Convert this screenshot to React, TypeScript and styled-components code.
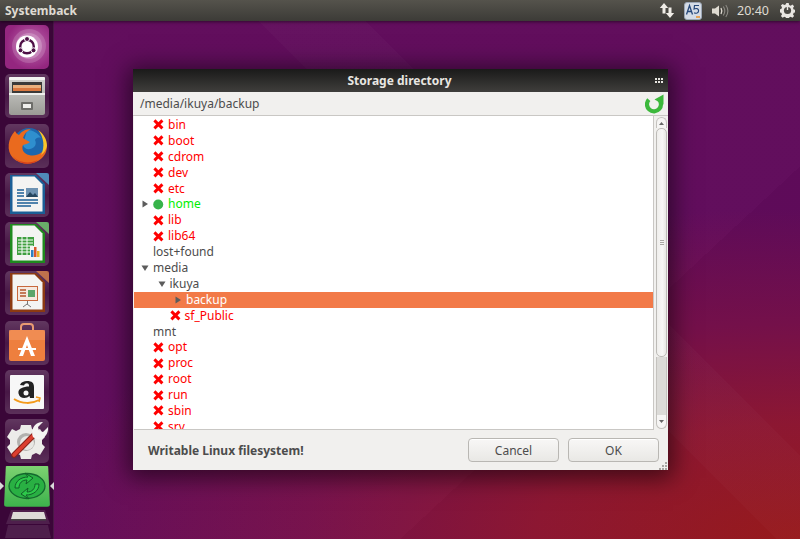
import React from "react";
import styled, { createGlobalStyle } from "styled-components";

const Global = createGlobalStyle`
  html, body { margin: 0; padding: 0; width: 800px; height: 539px; overflow: hidden; }
  #root { width: 800px; height: 539px; }
  * { box-sizing: border-box; }
`;

const Screen = styled.div`
  position: relative;
  width: 800px;
  height: 539px;
  overflow: hidden;
  display: flex;
  flex-direction: column;
  font-family: "Noto Sans", "Open Sans", sans-serif;
  background:
    linear-gradient(137deg, rgba(255,255,255,.012) 0 71%, rgba(0,0,0,.02) 71% 100%),
    linear-gradient(45deg, rgba(255,255,255,0) 0 58%, rgba(255,255,255,.018) 58% 66%, rgba(0,0,0,0) 66%),
    radial-gradient(ellipse 760px 330px at 100% 100%, #9a1a1c 0%, #8f1733 35%, rgba(122,17,72,.85) 65%, rgba(94,8,87,0) 100%),
    #600b5b;
`;

const TopBar = styled.header`
  height: 21px;
  flex: none;
  display: flex;
  align-items: center;
  padding: 0 2px 0 5px;
  background: linear-gradient(#55534c, #3c3b37);
  box-shadow: 0 1px 3px rgba(0,0,0,.5);
  z-index: 2;
`;

const AppTitle = styled.span`
  flex: 1;
  font-size: 12px;
  font-weight: 700;
  color: #dfdbd2;
`;

const Tray = styled.div`
  display: flex;
  align-items: center;
`;

const TrayItem = styled.span<{ $w: number }>`
  width: ${(p) => p.$w}px;
  display: flex;
  justify-content: center;
  align-items: center;
  color: #dfdbd2;
  font-size: 12.5px;
`;

const Body = styled.div`
  flex: 1;
  display: flex;
  min-height: 0;
`;

const Launcher = styled.nav`
  width: 54px;
  flex: none;
  display: flex;
  flex-direction: column;
  gap: 5.3px;
  padding: 4px 0 0 5px;
  background: rgba(46, 4, 44, .75);
  border-right: 1px solid rgba(255,255,255,.08);
`;

const Tile = styled.div<{ $bg?: string }>`
  width: 44px;
  height: 44px;
  flex: none;
  border-radius: 5px;
  background: ${(p) => p.$bg ?? "linear-gradient(rgba(255,255,255,.2), rgba(255,255,255,.07) 50%, rgba(255,255,255,.17))"};
  display: flex;
  align-items: center;
  justify-content: center;
`;

const ActiveMark = styled.div`
  position: absolute;
  top: 482px;
  width: 0;
  height: 0;
  border-top: 4px solid transparent;
  border-bottom: 4px solid transparent;
`;
const MarkLeft = styled(ActiveMark)`
  left: 0;
  border-left: 4px solid #d8d8d8;
`;
const MarkRight = styled(ActiveMark)`
  left: 50px;
  border-right: 4px solid #d8d8d8;
`;

const Window = styled.section`
  position: absolute;
  left: 133px;
  top: 69px;
  width: 535px;
  height: 401px;
  display: flex;
  flex-direction: column;
  background: #f1f0ee;
  box-shadow: 0 3px 22px 5px rgba(0,0,0,.55);
`;

const TitleBar = styled.div`
  position: relative;
  height: 23px;
  flex: none;
  background: linear-gradient(#1a1a19, #3f3e3c);
  color: #e8e6e1;
  font-size: 12px;
  font-weight: 700;
  display: flex;
  align-items: center;
  justify-content: center;
  padding-right: 2px;
`;

const Grip = styled.span`
  position: absolute;
  right: 5px;
  top: 9px;
  display: grid;
  grid-template-columns: repeat(3, 2px);
  gap: 1px;
`;
const GripDot = styled.i`
  display: block;
  width: 2px;
  height: 2px;
  background: #e8e6e1;
`;

const PathBar = styled.div`
  height: 24px;
  flex: none;
  display: flex;
  align-items: center;
  justify-content: space-between;
  padding: 0 3px 0 7px;
  font-size: 12px;
  color: #4c4c4c;
  border-bottom: 1px solid #c9c7c4;
`;

const Main = styled.div`
  height: 314px;
  flex: none;
  display: flex;
  padding-left: 1px;
`;

const Tree = styled.div`
  flex: 1;
  min-width: 0;
  overflow: hidden;
  padding-top: 1px;
  background: #fff;
  border-right: 1px solid #c9c7c4;
  border-bottom: 1px solid #c9c7c4;
`;

const Row = styled.div<{ $level: number; $selected?: boolean; $color: string }>`
  height: 15.9px;
  display: flex;
  align-items: center;
  padding-left: ${(p) => 3 + p.$level * 16.5}px;
  font-size: 12px;
  line-height: 16px;
  color: ${(p) => (p.$selected ? "#fff" : p.$color)};
  background: ${(p) => (p.$selected ? "#f27a48" : "transparent")};
`;

const Expander = styled.span`
  width: 16px;
  flex: none;
  display: flex;
  align-items: center;
  justify-content: center;
`;

const Mark = styled.span`
  width: 15px;
  flex: none;
  display: flex;
  align-items: center;
`;

const Scrollbar = styled.div`
  width: 11px;
  flex: none;
  margin: 1px 1px 1px 2px;
  display: flex;
  flex-direction: column;
`;

const ScrollButton = styled.div<{ $down?: boolean }>`
  height: ${(p) => (p.$down ? 14 : 11)}px;
  flex: none;
  border-radius: ${(p) => (p.$down ? "0 0 6px 6px" : "6px 6px 0 0")};
  background: #f6f5f4;
  border: 1px solid #c4c2be;
  border-top-width: ${(p) => (p.$down ? 0 : 1)}px;
  border-bottom-width: ${(p) => (p.$down ? 1 : 0)}px;
  display: flex;
  align-items: center;
  justify-content: center;
`;

const Thumb = styled.div`
  height: 229px;
  flex: none;
  background: linear-gradient(90deg, #efeeec, #f8f7f6 60%, #e8e7e4);
  border: 1px solid #bdbbb7;
  border-radius: 5px;
  display: flex;
  flex-direction: column;
  align-items: center;
  justify-content: center;
  gap: 1px;
`;

const ThumbLine = styled.i`
  display: block;
  width: 4px;
  height: 1px;
  background: #a9a7a3;
`;

const Track = styled.div`
  flex: 1;
  background: #dcdbd8;
  border-left: 1px solid #c4c2be;
  border-right: 1px solid #c4c2be;
`;

const Footer = styled.div`
  flex: 1;
  position: relative;
  display: flex;
  align-items: center;
  padding: 0 9px 0 15px;
  gap: 9px;
`;

const Status = styled.strong`
  flex: 1;
  font-size: 12px;
  color: #4c4c4c;
`;

const Button = styled.button`
  width: 91px;
  height: 24px;
  padding: 0;
  border: 1px solid #b9b7b3;
  border-radius: 4px;
  background: linear-gradient(#f8f7f6, #e9e8e5);
  box-shadow: inset 0 1px 0 #fff;
  color: #4c4c4c;
  font-family: inherit;
  font-size: 12px;
`;

const ResizeGrip = styled.span`
  position: absolute;
  right: 1px;
  bottom: 0;
  line-height: 0;
`;

const Cross = () => (
  <svg width="11" height="11" viewBox="0 0 11 11">
    <path d="M1.400 1.400 9.400 9.400M9.400 1.400 1.400 9.400" stroke="#f00" strokeWidth="2.900" />
  </svg>
);
const Dot = () => (
  <svg width="11" height="11" viewBox="0 0 11 11">
    <circle cx="5.200" cy="5.500" r="5" fill="#37b34a" />
  </svg>
);
const Arrow = ({ open }: { open?: boolean }) => (
  <svg width="8" height="8" viewBox="0 0 8 8">
    <path d={open ? "M.5 1.500h7L4 7z" : "M1.500 .5v7L7 4z"} fill="#5c5c5c" />
  </svg>
);

type Item = {
  name: string;
  level?: number;
  state?: "bad" | "good";
  expander?: "open" | "closed";
  selected?: boolean;
};

const items: Item[] = [
  { name: "bin", state: "bad" },
  { name: "boot", state: "bad" },
  { name: "cdrom", state: "bad" },
  { name: "dev", state: "bad" },
  { name: "etc", state: "bad" },
  { name: "home", state: "good", expander: "closed" },
  { name: "lib", state: "bad" },
  { name: "lib64", state: "bad" },
  { name: "lost+found" },
  { name: "media", expander: "open" },
  { name: "ikuya", level: 1, expander: "open" },
  { name: "backup", level: 2, expander: "closed", selected: true },
  { name: "sf_Public", level: 1, state: "bad" },
  { name: "mnt" },
  { name: "opt", state: "bad" },
  { name: "proc", state: "bad" },
  { name: "root", state: "bad" },
  { name: "run", state: "bad" },
  { name: "sbin", state: "bad" },
  { name: "srv", state: "bad" },
];

const rowColor = (s?: Item["state"]) => (s === "bad" ? "#f00" : s === "good" ? "#0e0" : "#4c4c4c");

const UbuntuIcon = () => (
  <svg width="44" height="44" viewBox="0 0 44 44">
    <circle cx="24" cy="21" r="17" fill="#fff" opacity=".16" />
    <circle cx="24" cy="21" r="13" fill="#fff" opacity=".2" />
    <circle cx="22" cy="21.500" r="11" fill="#fff" />
    <circle cx="22" cy="21.500" r="6.800" fill="none" stroke="#4e0f46" strokeWidth="2.400" />
    <circle cx="22" cy="14" r="2.500" fill="#4e0f46" stroke="#fff" strokeWidth="1" />
    <circle cx="15.500" cy="25.300" r="2.500" fill="#4e0f46" stroke="#fff" strokeWidth="1" />
    <circle cx="28.500" cy="25.300" r="2.500" fill="#4e0f46" stroke="#fff" strokeWidth="1" />
  </svg>
);
const FilesIcon = () => (
  <svg width="44" height="44" viewBox="0 0 44 44">
    <defs>
      <linearGradient id="cab" x1="0" y1="0" x2="0" y2="1">
        <stop offset="0" stopColor="#d4d4d0" />
        <stop offset="1" stopColor="#9b9b96" />
      </linearGradient>
    </defs>
    <rect x="4" y="3" width="36" height="38" rx="2.500" fill="url(#cab)" />
    <rect x="4" y="3" width="36" height="3" rx="1" fill="#f3f3f1" />
    <rect x="7" y="8" width="30" height="12" fill="#3b3a38" />
    <rect x="8" y="11" width="28" height="3" fill="#eab07c" />
    <rect x="8" y="14" width="28" height="3" fill="#d9783f" />
    <rect x="4" y="19" width="36" height="2" fill="#efefec" />
    <rect x="16" y="28" width="12" height="8" rx="1" fill="#6d6d69" />
    <rect x="18" y="30" width="8" height="4" fill="#efefec" />
  </svg>
);
const FirefoxIcon = () => (
  <svg width="44" height="44" viewBox="0 0 44 44">
    <circle cx="24" cy="20" r="16" fill="#1d67ad" />
    <path d="M22 6c6 0 11 3 14 8-3-1-5 0-6 2 2 4 0 8-5 9-3 1-6-1-7-4z" fill="#2f8fce" />
    <path d="M10 7C3 14 1 27 8 34c7 7 21 8 29 0 4-4 5-8 5-13-3 8-11 12-18 10-5-1-8-6-6-10 2-1 5-1 7-3-3-1-5-3-7-4 1-4 4-7 8-9-6 0-10 3-12 6-2-1-3-2-4-4z" fill="#ea6a1e" />
    <path d="M33 6c6 4 9 10 9 16-1 4-3 7-6 9 4-8 3-18-3-25z" fill="#f8c52b" />
    <path d="M6 30c5 8 17 11 27 6-8 7-21 4-27-6z" fill="#d6401a" />
  </svg>
);
const DocIcon = ({ c1, c2, body }: { c1: string; c2: string; body: React.ReactNode }) => (
  <svg width="44" height="44" viewBox="0 0 44 44">
    <path d="M5 2h26l9 9v30H5z" fill={c1} />
    <path d="M31 0h11a2 2 0 0 1 2 2v10z" fill={c2} opacity=".85" />
    <path d="M7.500 3.500h22l8 8V38.500h-30z" fill="#f4f4f2" />
    {body}
  </svg>
);
const WriterBody = (
  <g>
    <path d="M12 17h7M12 20h7M12 23h7M12 27h21M12 30h21M12 33h14" stroke="#1b5f96" strokeWidth="1.500" />
    <rect x="21" y="15" width="12" height="9" fill="#6e93b2" />
    <path d="M21 24l4-5 3 3 2-2 3 4z" fill="#25465f" />
  </g>
);
const CalcBody = (
  <g>
    <rect x="12" y="15" width="17" height="18" fill="#3f9f3f" />
    <path d="M13 18h15M13 21h15M13 24h15M13 27h15M13 30h15" stroke="#fff" strokeWidth="1.200" />
    <path d="M17 15v18M22 15v18" stroke="#fff" strokeWidth="1" />
    <rect x="25" y="24" width="10" height="11" fill="#f4f4f2" />
    <rect x="26" y="28" width="2.500" height="7" fill="#2d7fc3" />
    <rect x="29" y="25" width="2.500" height="10" fill="#d9572c" />
    <rect x="32" y="29" width="2.500" height="6" fill="#e5b32a" />
  </g>
);
const ImpressBody = (
  <g>
    <rect x="12" y="15" width="21" height="15" fill="#c8683c" />
    <rect x="13" y="16" width="19" height="13" fill="#f5e9e0" />
    <path d="M15 19h6M15 22h6M15 25h6" stroke="#b4562c" strokeWidth="1.500" />
    <rect x="23" y="19" width="7" height="7" fill="#5aa56a" />
    <path d="M22.500 30v3M18 36l4-3 4 3" stroke="#777" fill="none" />
  </g>
);
const StoreIcon = () => (
  <svg width="44" height="44" viewBox="0 0 44 44">
    <path d="M16 10V6a3 3 0 0 1 3-3h6a3 3 0 0 1 3 3v4" fill="none" stroke="#e99a72" strokeWidth="2" />
    <rect x="4" y="9" width="36" height="31" rx="2" fill="#ee7f3e" />
    <rect x="4" y="9" width="36" height="10" fill="#f29a66" opacity=".5" />
    <path d="M22 15l-8 20h4l4-11 4 11h4z" fill="#fff" />
    <rect x="13" y="27" width="18" height="2" fill="#fff" />
  </svg>
);
const AmazonIcon = () => (
  <svg width="44" height="44" viewBox="0 0 44 44">
    <rect x="5" y="5" width="34" height="34" rx="1" fill="#f7f7f7" />
    <path d="M15 15c1-3 4-4 7-4 5 0 7 2 7 6v11h-4l-.5-2c-3 3-10 3-11-2.500-1-5 5-7 10.500-7v-1c0-3-4-3-5 0z" fill="#222" />
    <circle cx="21" cy="23" r="2.500" fill="#f7f7f7" />
    <path d="M9 29c8 5 18 5 25 1" stroke="#f39a1b" strokeWidth="2" fill="none" />
    <path d="M31 27l4 1-1 4" stroke="#f39a1b" strokeWidth="1.500" fill="none" />
  </svg>
);
const SettingsIcon = () => (
  <svg width="44" height="44" viewBox="0 0 44 44">
    <path d="M16 6h10l1 4 4 2 4-2 5 8-3 3v4l3 3-5 8-4-2-4 2-1 4H16l-1-4-4-2-4 2-5-8 3-3v-4l-3-3 5-8 4 2 4-2z" fill="#ecece9" />
    <circle cx="21" cy="23" r="9" fill="#b2b1ae" />
    <circle cx="22" cy="24" r="7" fill="#e8e7e4" />
    <path d="M9 36 30 15" stroke="#8a2219" strokeWidth="5.500" strokeLinecap="round" />
    <path d="M9 36 30 15" stroke="#dc3f30" strokeWidth="3.500" strokeLinecap="round" />
    <path d="M28 18C25 11 30 2 38 3l-5 5 1 4 4 1 5-5c1 8-6 14-12 12z" fill="#f4f4f2" />
  </svg>
);
const BackupTile = styled.div`
  width: 46px;
  height: 41px;
  flex: none;
  margin: -3px 0 0 -1px;
  clip-path: polygon(4% 0, 96% 0, 100% 100%, 0 100%);
  border-radius: 3px;
  background: linear-gradient(#7ed272, #3cb24b);
  display: flex;
  align-items: center;
  justify-content: center;
`;
const SystembackIcon = () => (
  <svg width="40" height="38" viewBox="0 0 40 38">
    <ellipse cx="20" cy="19" rx="18" ry="12.500" fill="#29b043" stroke="#14692e" strokeWidth="1.300" />
    <path d="M8 21c0-7 6-11 13-11l-3-4 8 5-7 6 1-4c-5 0-8 3-8 8zM32 17c0 7-6 11-13 11l3 4-8-5 7-6-1 4c5 0 8-3 8-8z" fill="#2dc84a" stroke="#125f28" strokeWidth="1" />
  </svg>
);
const Drive = styled.div`
  flex: none;
  margin-top: -6px;
  margin-left: -1px;
  line-height: 0;
`;
const DriveIcon = () => (
  <svg width="48" height="32" viewBox="0 0 48 32">
    <path d="M7 4 2 18h44L41 4z" fill="#fff" opacity=".1" />
    <path d="M9 6h31l2 7H7z" fill="#dddcd8" />
    <rect x="7" y="13" width="35" height="1.500" fill="#444" />
    <path d="M4 19 1 32h46l-3-13z" fill="#fff" opacity=".1" />
  </svg>
);

const NetIcon = () => (
  <svg width="16" height="15" viewBox="0 0 16 15">
    <path d="M5 0 .8 5H3.500v5.500h3V5H9.200zM11 15l4.200-5H12.500V4.500h-3V10H6.800z" fill="#efece6" />
  </svg>
);
const KeyboardIcon = () => (
  <svg width="18" height="18" viewBox="0 0 18 18">
    <rect x=".5" y=".5" width="17" height="17" rx="2.500" fill="#d5dce6" stroke="#9ba6b5" />
    <path d="M2.500 12.500 5.500 3.500 8.500 12.500M3.700 9.500h3.600" stroke="#27487a" strokeWidth="1.300" fill="none" />
    <path d="M15 3.500h-4.500l-.4 3.500c2-1 4.500-.5 4.500 1.800s-2.500 3-4.500 2" stroke="#27487a" strokeWidth="1.200" fill="none" />
    <path d="M12 15h4" stroke="#e8912a" strokeWidth="1.500" />
  </svg>
);
const VolumeIcon = () => (
  <svg width="18" height="16" viewBox="0 0 18 16">
    <path d="M1 5.500h3L8 2.500v11l-4-3H1z" fill="#dfdbd2" />
    <path d="M10 5c1 1.800 1 4.200 0 6" stroke="#dfdbd2" strokeWidth="1.300" fill="none" />
    <path d="M12.300 3.500c1.800 2.700 1.800 6.300 0 9M14.800 2c2.500 3.600 2.500 8.400 0 12" stroke="#8c8a84" strokeWidth="1.100" fill="none" />
  </svg>
);
const PowerIcon = () => (
  <svg width="15" height="15" viewBox="0 0 15 15">
    <path d="M6.300 0h2.400l.4 2 1.600.7 1.700-1.100 1.700 1.700-1.100 1.700.7 1.600 2 .4v2.400l-2 .4-.7 1.600 1.100 1.700-1.700 1.700-1.700-1.100-1.600.7-.4 2H6.300l-.4-2-1.600-.7-1.700 1.100-1.700-1.700 1.100-1.700-.7-1.600-2-.4V6.300l2-.4.7-1.600-1.100-1.700 1.700-1.700 1.700 1.100 1.600-.7z" fill="#e8e6e1" />
    <circle cx="7.500" cy="7.500" r="3.600" fill="#4a4943" />
    <path d="M7.500 3v4" stroke="#e8e6e1" strokeWidth="1.400" />
  </svg>
);
const RefreshIcon = () => (
  <svg width="20" height="20" viewBox="0 0 20 20">
    <path d="M3.800 5.600A7 7 0 1 0 13.500 5" fill="none" stroke="#3cb83c" strokeWidth="4.200" />
    <path d="M18.500 .5v10L9.500 5.500z" fill="#3cb83c" />
  </svg>
);

export default function App() {
  return (
    <Screen>
      <Global />
      <TopBar>
        <AppTitle>Systemback</AppTitle>
        <Tray>
          <TrayItem $w={18}><NetIcon /></TrayItem>
          <TrayItem $w={34}><KeyboardIcon /></TrayItem>
          <TrayItem $w={20}><VolumeIcon /></TrayItem>
          <TrayItem $w={46}>20:40</TrayItem>
          <TrayItem $w={22}><PowerIcon /></TrayItem>
        </Tray>
      </TopBar>
      <Body>
        <Launcher>
          <Tile $bg="radial-gradient(circle at 60% 45%, #c06ab0, #94267f 70%)"><UbuntuIcon /></Tile>
          <Tile><FilesIcon /></Tile>
          <Tile><FirefoxIcon /></Tile>
          <Tile><DocIcon c1="#1b5f96" c2="#4e9ac9" body={WriterBody} /></Tile>
          <Tile><DocIcon c1="#1f8a1f" c2="#6cc36c" body={CalcBody} /></Tile>
          <Tile><DocIcon c1="#8c3a12" c2="#d17c4a" body={ImpressBody} /></Tile>
          <Tile><StoreIcon /></Tile>
          <Tile><AmazonIcon /></Tile>
          <Tile><SettingsIcon /></Tile>
          <BackupTile><SystembackIcon /></BackupTile>
          <Drive><DriveIcon /></Drive>
        </Launcher>
      </Body>
      <MarkLeft />
      <MarkRight />
      <Window>
        <TitleBar>
          Storage directory
          <Grip>
            {Array.from({ length: 6 }, (_, i) => <GripDot key={i} />)}
          </Grip>
        </TitleBar>
        <PathBar>
          /media/ikuya/backup
          <RefreshIcon />
        </PathBar>
        <Main>
          <Tree>
            {items.map((it) => (
              <Row key={it.name} $level={it.level ?? 0} $selected={it.selected} $color={rowColor(it.state)}>
                <Expander>{it.expander && <Arrow open={it.expander === "open"} />}</Expander>
                {it.state && <Mark>{it.state === "bad" ? <Cross /> : <Dot />}</Mark>}
                {it.name}
              </Row>
            ))}
          </Tree>
          <Scrollbar>
            <ScrollButton>
              <svg width="5" height="3" viewBox="0 0 5 3"><path d="M0 3h5L2.500 0z" fill="#666" /></svg>
            </ScrollButton>
            <Thumb>
              <ThumbLine /><ThumbLine /><ThumbLine />
            </Thumb>
            <Track />
            <ScrollButton $down>
              <svg width="5" height="3" viewBox="0 0 5 3"><path d="M0 0h5L2.500 3z" fill="#666" /></svg>
            </ScrollButton>
          </Scrollbar>
        </Main>
        <Footer>
          <Status>Writable Linux filesystem!</Status>
          <Button>Cancel</Button>
          <Button>OK</Button>
          <ResizeGrip>
            <svg width="8" height="8" viewBox="0 0 8 8">
              <path d="M6 0h2v2H6zM3 3h2v2H3zM6 3h2v2H6zM0 6h2v2H0zM3 6h2v2H3zM6 6h2v2H6z" fill="#a8a6a2" />
            </svg>
          </ResizeGrip>
        </Footer>
      </Window>
    </Screen>
  );
}
